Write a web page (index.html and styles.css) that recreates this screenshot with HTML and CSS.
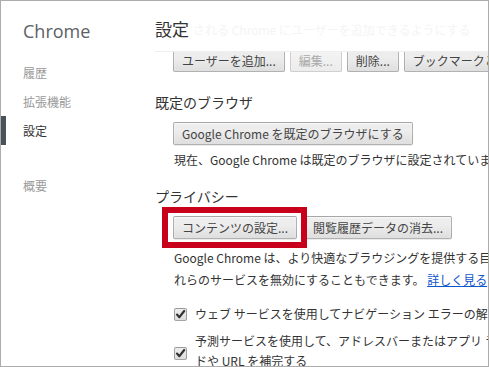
FILE: index.html
```html
<!DOCTYPE html>
<html lang="ja">
<head>
<meta charset="utf-8">
<title>設定</title>
<link rel="stylesheet" href="styles.css">
</head>
<body>
<div class="frame">
  <nav class="side">
    <div class="brand">Chrome</div>
    <ul class="menu">
      <li class="item">履歴</li>
      <li class="item">拡張機能</li>
      <li class="item active">設定</li>
      <li class="item spaced">概要</li>
    </ul>
  </nav>
  <main class="main">
    <header class="head">
      <h1 class="title">設定</h1>
      <span class="ghost">される Chrome にユーザーを追加できるようにする</span>
    </header>
    <div class="peek">
      <button class="btn">ユーザーを追加...</button>
      <button class="btn disabled">編集...</button>
      <button class="btn">削除...</button>
      <button class="btn">ブックマークと設定をインポート...</button>
    </div>
    <section class="section first">
      <h2 class="heading">既定のブラウザ</h2>
      <div class="row">
        <button class="btn">Google Chrome を既定のブラウザにする</button>
      </div>
      <p class="text">現在、Google Chrome は既定のブラウザに設定されていません。</p>
    </section>
    <section class="section">
      <h2 class="heading">プライバシー</h2>
      <div class="row">
        <div class="mark">
          <button class="btn">コンテンツの設定...</button>
          <span class="redbox"></span>
        </div>
        <button class="btn">閲覧履歴データの消去...</button>
      </div>
      <p class="text desc">
        <span class="line">Google Chrome は、より快適なブラウジングを提供する目的でウェブ サービスを使用することがあります。こ</span>
        <span class="line">れらのサービスを無効にすることもできます。 <a class="link" href="#">詳しく見る</a></span>
      </p>
      <label class="check">
        <span class="box"><svg viewBox="0 0 13 13" width="13" height="13"><path d="M3 6.6 L5.4 9.2 L10.2 3" fill="none" stroke="#333" stroke-width="2.2" stroke-linecap="round" stroke-linejoin="round"/></svg></span>
        <span class="label">ウェブ サービスを使用してナビゲーション エラーの解決を行う</span>
      </label>
      <label class="check two">
        <span class="box"><svg viewBox="0 0 13 13" width="13" height="13"><path d="M3 6.6 L5.4 9.2 L10.2 3" fill="none" stroke="#333" stroke-width="2.2" stroke-linecap="round" stroke-linejoin="round"/></svg></span>
        <span class="label lines">
          <span class="line">予測サービスを使用して、アドレスバーまたはアプリ ランチャーの検索ボックスに入力した検索キーワー</span>
          <span class="line">ドや URL を補完する</span>
        </span>
      </label>
    </section>
  </main>
</div>
</body>
</html>
```
FILE: styles.css
```css
* { box-sizing: border-box; }
html, body { margin: 0; padding: 0; background: #fff; }
body {
  font-family: "Noto Sans CJK JP", "Noto Sans", sans-serif;
  font-size: 12px;
  color: #333;
}
.frame {
  width: 489px;
  height: 367px;
  border: 1px solid #acacac;
  display: flex;
  overflow: hidden;
  background: #fff;
}
.side {
  width: 154px;
  flex: none;
}
.brand {
  font-family: "Open Sans", "Noto Sans", sans-serif;
  font-size: 18px;
  line-height: 24px;
  color: #5c6166;
  padding: 18px 0 0 22px;
  height: 56.5px;
}
.menu {
  list-style: none;
  margin: 0;
  padding: 0;
}
.item {
  height: 29px;
  line-height: 29px;
  border-left: 5px solid transparent;
  padding-left: 17px;
  color: #999;
  font-size: 12px;
}
.item.active {
  border-left-color: #4b525a;
  color: #333;
}
.item.spaced { margin-top: 26px; }
.main {
  flex: 1;
  min-width: 0;
  overflow: hidden;
}
.head {
  display: flex;
  align-items: center;
  height: 51px;
  padding-top: 6px;
  border-bottom: 1px solid #eee;
  white-space: nowrap;
  overflow: hidden;
}
.title {
  margin: 0;
  font-size: 17px;
  font-weight: normal;
  color: #333;
  line-height: 24px;
}
.ghost {
  margin-left: 4px;
  color: #f4f4f4;
  font-size: 12px;
}
.peek {
  height: 20px;
  overflow: hidden;
  display: flex;
  align-items: flex-end;
  gap: 5px;
  padding-left: 18px;
  white-space: nowrap;
}
.btn {
  flex: none;
  height: 23px;
  padding: 0 8px;
  border: 1px solid rgba(0, 0, 0, 0.25);
  border-radius: 2px;
  background: linear-gradient(#ededed, #ededed 38%, #dedede);
  box-shadow: 0 1px 0 rgba(0, 0, 0, 0.08), inset 0 1px 2px rgba(255, 255, 255, 0.75);
  color: #444;
  font-family: "Noto Sans CJK JP", "Noto Sans", sans-serif;
  font-size: 12px;
  line-height: 20px;
  white-space: nowrap;
}
.btn.disabled {
  color: #aaa;
  background: linear-gradient(#f4f4f4, #ececec);
  border-color: rgba(0, 0, 0, 0.15);
}
.section { padding-top: 16px; }
.section.first { padding-top: 20px; }
.heading {
  margin: 0;
  font-size: 14px;
  font-weight: normal;
  line-height: 20px;
  color: #333;
}
.row {
  display: flex;
  gap: 7px;
  padding: 10px 0 0 18px;
  white-space: nowrap;
}
.text {
  margin: 0;
  padding: 5px 0 0 19px;
  line-height: 20px;
  white-space: nowrap;
}
.text.desc {
  display: flex;
  flex-direction: column;
  padding-top: 8px;
}
.text.desc .line { line-height: 22px; }
.lines { display: flex; flex-direction: column; }
.line { display: block; line-height: 20px; white-space: nowrap; }
.link { color: #15c; text-decoration: underline; }
.mark { position: relative; display: flex; }
.redbox {
  position: absolute;
  left: -11px;
  top: -9px;
  right: -10px;
  bottom: -9px;
  border: 6px solid #c9001c;
  pointer-events: none;
}
.check {
  display: flex;
  align-items: center;
  gap: 8px;
  padding-left: 19px;
  white-space: nowrap;
  margin-top: 13px;
}
.check.two { margin-top: 7px; align-items: flex-start; }
.check.two .box { margin-top: 16px; }
.box {
  flex: none;
  width: 13px;
  height: 13px;
  border: 1px solid rgba(0, 0, 0, 0.3);
  border-radius: 2px;
  background: linear-gradient(#ededed, #dedede);
  display: flex;
  align-items: center;
  justify-content: center;
  overflow: hidden;
}
.box svg { display: block; flex: none; }
.label { line-height: 20px; }
```
